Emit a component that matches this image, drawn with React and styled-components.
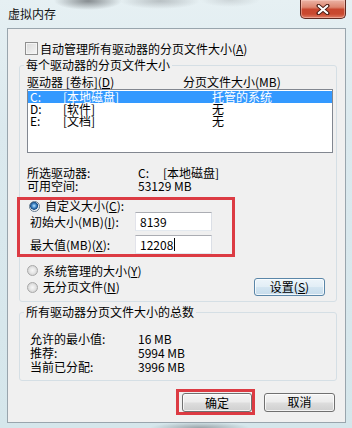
import React from 'react';
import styled, { createGlobalStyle } from 'styled-components';

const Global = createGlobalStyle`
  html, body { margin: 0; padding: 0; background: #d7e7ec; }
  body {
    font-family: "Noto Sans CJK SC", "Liberation Sans", sans-serif;
    font-size: 12px;
    color: #000;
  }
  #root { width: 352px; height: 428px; }
  u { text-decoration: underline; text-underline-offset: 1px; }
`;

const Window = styled.div`
  width: 352px;
  height: 428px;
  box-sizing: border-box;
  display: flex;
  flex-direction: column;
  padding: 0 6px 5px 7px;
  overflow: hidden;
  background:
    radial-gradient(ellipse 34px 9px at 88px 1px, rgba(70, 74, 78, 0.6), rgba(70, 74, 78, 0) 100%),
    radial-gradient(ellipse 40px 8px at 160px 1px, rgba(110, 114, 118, 0.38), rgba(110, 114, 118, 0) 100%),
    radial-gradient(ellipse 30px 7px at 230px 0px, rgba(130, 134, 138, 0.25), rgba(130, 134, 138, 0) 100%),
    radial-gradient(ellipse 50px 6px at 200px 428px, rgba(80, 84, 88, 0.45), rgba(80, 84, 88, 0) 100%),
    linear-gradient(180deg, #e6f0f3 0%, #dbe9ee 30%, #d5e6eb 100%);
`;

const TitleBar = styled.div`
  height: 28px;
  flex: none;
  display: flex;
  justify-content: space-between;
  align-items: flex-start;
`;

const Title = styled.div`
  margin: 6px 0 0 1px;
  font-size: 12px;
  line-height: 16px;
  color: #111;
`;

const CloseButton = styled.div`
  width: 46px;
  height: 19px;
  box-sizing: border-box;
  border: 1px solid #5e2a22;
  border-top: none;
  border-radius: 0 0 5px 5px;
  background: linear-gradient(180deg, #ebb3a5 0%, #dd8670 40%, #c8472f 52%, #c9492f 78%, #df7e67 100%);
  box-shadow: inset 0 0 0 1px rgba(255, 215, 205, 0.45);
  display: flex;
  align-items: center;
  justify-content: center;
`;

const Client = styled.div`
  flex: 1;
  display: flex;
  flex-direction: column;
  background: #f0f0f0;
  border: 1px solid #99a5ad;
  padding-top: 13px;
`;

const CheckRow = styled.div`
  margin-left: 17px;
  height: 13px;
  line-height: 13px;
  display: flex;
  align-items: center;
  gap: 2px;
`;

const CheckBox = styled.span`
  width: 13px;
  height: 13px;
  flex: none;
  box-sizing: border-box;
  border: 1px solid #8f8f8f;
  background: linear-gradient(135deg, #d9d9d9 0%, #f6f6f6 100%);
  box-shadow: inset 0 0 0 1px #f4f4f4;
`;

const Group = styled.fieldset`
  margin: ${p => p.$mt}px 8px 0 11px;
  padding: 0 3px ${p => p.$pb}px 7px;
  border: 1px solid #d5dfe5;
  border-radius: 3px;
  min-width: 0;
`;

const Legend = styled.legend`
  margin-left: -3px;
  padding: 0 2px;
  font-size: 12px;
  line-height: 14px;
`;

const HeaderRow = styled.div`
  margin-top: 3px;
  display: grid;
  grid-template-columns: 156px 1fr;
  line-height: 14px;
`;

const ListBox = styled.div`
  height: 64px;
  box-sizing: border-box;
  border: 1px solid #828790;
  background: #fff;
  padding: 1px 0;
`;

const ListRow = styled.div`
  display: grid;
  grid-template-columns: 33px 149px 1fr;
  padding-left: 2px;
  height: 12px;
  line-height: 12px;
  background: ${p => (p.$selected ? '#3399ff' : 'transparent')};
  color: ${p => (p.$selected ? '#fff' : '#000')};
`;

const InfoGrid = styled.div`
  margin-top: 13px;
  display: grid;
  grid-template-columns: 111px 1fr;
  line-height: 13px;
`;

const Drive = styled.span`
  display: inline-block;
  width: 25px;
`;

const Highlight = styled.div`
  margin: 5px 0 0 -10px;
  width: 218px;
  box-sizing: border-box;
  border: 3px solid #dc3b43;
  padding-left: 9px;
  display: flex;
  flex-direction: column;
`;

const RadioRow = styled.div`
  height: ${p => p.$h || 12}px;
  margin-top: ${p => p.$mt || 0}px;
  display: flex;
  align-items: center;
  gap: 5px;
  line-height: 14px;
`;

const Radio = styled.span`
  width: 11px;
  height: 11px;
  flex: none;
  border-radius: 50%;
  box-sizing: border-box;
  border: 1px solid ${p => (p.$checked ? '#62788c' : '#a8a8a8')};
  background: ${p =>
    p.$checked
      ? 'radial-gradient(circle at 45% 42%, #cfeaff 0, #6fb0e6 1.2px, #1f5d9c 3.2px, #1a4f86 3.7px, #e2e7ec 4.2px, #f5f6f7 5px)'
      : 'radial-gradient(circle at 50% 50%, #f7f7f7 0, #e8e8e8 2.5px, #d3d3d3 5px)'};
`;

const FieldRow = styled.div`
  margin-top: ${p => p.$mt || 0}px;
  height: 19px;
  padding-left: 1px;
  display: grid;
  grid-template-columns: 105px 77px;
  align-items: center;
  line-height: 14px;
`;

const TextBox = styled.div`
  height: 19px;
  box-sizing: border-box;
  border: 1px solid;
  border-color: #abadb3 #dbdfe6 #e3e9ef #e2e3ea;
  background: #fff;
  padding-left: 4px;
  line-height: 17px;
  display: flex;
  align-items: center;
`;

const Caret = styled.span`
  display: inline-block;
  width: 0;
  height: 13px;
  border-left: 1px solid #000;
  margin-left: 1px;
`;

const OptionRow = styled.div`
  height: 18px;
  display: flex;
  align-items: center;
  justify-content: space-between;
`;

const OptionLabel = styled.div`
  display: flex;
  align-items: center;
  gap: 5px;
  line-height: 14px;
`;

const Button = styled.div`
  width: ${p => p.$w}px;
  height: ${p => p.$h || 19}px;
  margin-right: ${p => p.$mr || 0}px;
  box-sizing: border-box;
  border: 1px solid ${p => (p.$blue ? '#5a86a8' : '#707070')};
  border-radius: 3px;
  background: ${p =>
    p.$blue
      ? 'linear-gradient(180deg, #edf5fa 0%, #e2eef6 48%, #d3e5f1 52%, #c6dcec 100%)'
      : 'linear-gradient(180deg, #f4f4f4 0%, #ebebeb 48%, #dddddd 52%, #cfcfcf 100%)'};
  box-shadow: inset 0 0 0 1px rgba(255, 255, 255, 0.75);
  display: flex;
  align-items: center;
  justify-content: center;
  line-height: 14px;
  flex: none;
`;

const TotalsGrid = styled.div`
  margin-top: 13px;
  padding-left: 3px;
  display: grid;
  grid-template-columns: 108px 1fr;
  line-height: 14px;
`;

const ButtonRow = styled.div`
  margin: 8px 10px 0 0;
  display: flex;
  justify-content: flex-end;
  align-items: center;
  gap: 9px;
`;

const RedFrame = styled.div`
  border: 3px solid #dc3b43;
  padding: 1px 0 0 3px;
  display: flex;
`;

const drives = [
  { d: 'C:', label: '[本地磁盘]', size: '托管的系统', selected: true },
  { d: 'D:', label: '[软件]', size: '无' },
  { d: 'E:', label: '[文档]', size: '无' },
];

export default function App() {
  return (
    <>
      <Global />
      <Window>
        <TitleBar>
          <Title>虚拟内存</Title>
          <CloseButton>
            <svg width="14" height="11" viewBox="0 0 14 11">
              <path d="M2.5 1.8 L11.5 9.2 M11.5 1.8 L2.5 9.2" stroke="#4a1d15" strokeWidth="4" strokeLinecap="round" />
              <path d="M2.8 2 L11.2 9 M11.2 2 L2.8 9" stroke="#fff" strokeWidth="2.2" strokeLinecap="round" />
            </svg>
          </CloseButton>
        </TitleBar>
        <Client>
          <CheckRow>
            <CheckBox />
            <span>自动管理所有驱动器的分页文件大小(<u>A</u>)</span>
          </CheckRow>

          <Group $mt={3} $pb={5}>
            <Legend>每个驱动器的分页文件大小</Legend>
            <HeaderRow>
              <span>驱动器 [卷标](<u>D</u>)</span>
              <span>分页文件大小(MB)</span>
            </HeaderRow>
            <ListBox>
              {drives.map(r => (
                <ListRow key={r.d} $selected={r.selected}>
                  <span>{r.d}</span>
                  <span>{r.label}</span>
                  <span>{r.size}</span>
                </ListRow>
              ))}
            </ListBox>
            <InfoGrid>
              <span>所选驱动器:</span>
              <span><Drive>C:</Drive>[本地磁盘]</span>
              <span>可用空间:</span>
              <span>53129 MB</span>
            </InfoGrid>
            <Highlight>
              <RadioRow>
                <Radio $checked />
                <span>自定义大小(<u>C</u>):</span>
              </RadioRow>
              <FieldRow>
                <span>初始大小(MB)(<u>I</u>):</span>
                <TextBox>8139</TextBox>
              </FieldRow>
              <FieldRow $mt={4}>
                <span>最大值(MB)(<u>X</u>):</span>
                <TextBox>12208<Caret /></TextBox>
              </FieldRow>
            </Highlight>
            <RadioRow $mt={6} $h={15}>
              <Radio />
              <span>系统管理的大小(<u>Y</u>)</span>
            </RadioRow>
            <OptionRow>
              <OptionLabel>
                <Radio />
                <span>无分页文件(<u>N</u>)</span>
              </OptionLabel>
              <Button $w={71} $h={18} $mr={8} $blue>设置(<u>S</u>)</Button>
            </OptionRow>
          </Group>

          <Group $mt={3} $pb={6}>
            <Legend>所有驱动器分页文件大小的总数</Legend>
            <TotalsGrid>
              <span>允许的最小值:</span>
              <span>16 MB</span>
              <span>推荐:</span>
              <span>5994 MB</span>
              <span>当前已分配:</span>
              <span>3996 MB</span>
            </TotalsGrid>
          </Group>

          <ButtonRow>
            <RedFrame>
              <Button $w={70}>确定</Button>
            </RedFrame>
            <Button $w={71}>取消</Button>
          </ButtonRow>
        </Client>
      </Window>
    </>
  );
}
